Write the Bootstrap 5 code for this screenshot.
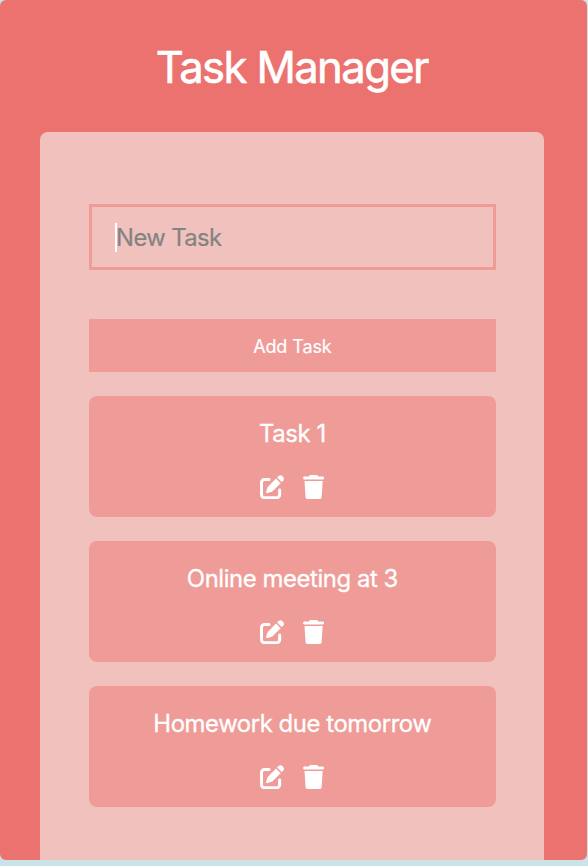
<!DOCTYPE html>
<html lang="en">
<head>
<meta charset="utf-8">
<meta name="viewport" content="width=device-width, initial-scale=1">
<title>Task Manager</title>
<link href="https://cdn.jsdelivr.net/npm/bootstrap@5.3.0/dist/css/bootstrap.min.css" rel="stylesheet">
<style>
body{background:#cbe2e9;font-family:Inter,"Liberation Sans",sans-serif;color:#fff;height:866px}
.app{width:587.4px;height:860px;background:#eb726e;border-radius:6px;padding:41px 43px 0 40.4px}
.app-title{font-size:43.6px;line-height:54px;font-weight:400;letter-spacing:-1.6px;text-indent:-1px;-webkit-text-stroke:.6px #fff;margin-bottom:36.7px}
.panel{background:#f1c1be;border-radius:8px 8px 0 0;padding:72.4px 48.3px 0}
.task-input{height:66px;border:3px solid #ef9b98;padding:1px 24px 0 23.4px;font-size:23.8px;letter-spacing:-.6px;color:#fff}
.task-input input{background:none;border:0;outline:0;padding:1px 0 0;min-width:0;color:#fff;letter-spacing:inherit}
.task-input input::placeholder{color:#838381;opacity:1;-webkit-text-stroke:.2px #838381}
.caret{width:2px;height:29px;background:#fff;margin-right:-1px}
.add-btn{height:53.4px;margin-top:48.6px;padding:2px 0 0;background:#ef9b98;color:#fff;font-size:18px;letter-spacing:-.1px;-webkit-text-stroke:.2px #fff}
.add-btn:hover{background:#ec918e;color:#fff}
.task-item{height:120.8px;margin-top:24.2px;background:#ef9b98;border-radius:8px;padding-top:21.8px}
.task-name{font-size:23.9px;line-height:32px;letter-spacing:-.43px;-webkit-text-stroke:.3px #fff}
.task-tools{margin-top:25px;gap:18.6px}
.task-tools button{background:none;border:0;padding:0;color:#fff}
.task-tools svg{height:24.2px;display:block;fill:currentColor}
</style>
</head>
<body>
<svg class="d-none" aria-hidden="true">
<symbol id="edit" viewBox="0 0 512 512"><path d="M471.6 21.7c-21.9-21.9-57.3-21.9-79.2 0L362.3 51.7l97.9 97.9 30.1-30.1c21.9-21.9 21.9-57.3 0-79.2L471.6 21.7zm-299.2 220c-6.1 6.1-10.8 13.6-13.5 21.9l-29.6 88.8c-2.9 8.6-.6 18.1 5.8 24.6s15.9 8.7 24.6 5.8l88.8-29.6c8.2-2.7 15.7-7.4 21.9-13.5L437.7 172.3 339.7 74.3 172.4 241.7zM96 64C43 64 0 107 0 160V416c0 53 43 96 96 96H352c53 0 96-43 96-96V320c0-17.7-14.3-32-32-32s-32 14.3-32 32v96c0 17.7-14.3 32-32 32H96c-17.7 0-32-14.3-32-32V160c0-17.7 14.3-32 32-32h96c17.7 0 32-14.3 32-32s-14.3-32-32-32H96z"/></symbol>
<symbol id="trash" viewBox="0 0 448 512"><path d="M135.2 17.7L128 32H32C14.3 32 0 46.3 0 64S14.3 96 32 96H416c17.7 0 32-14.3 32-32s-14.3-32-32-32H320l-7.2-14.3C307.4 6.8 296.3 0 284.2 0H163.8c-12.1 0-23.2 6.8-28.6 17.7zM416 128H32L53.2 467c1.6 25.3 22.6 45 47.9 45H346.9c25.3 0 46.3-19.7 47.9-45L416 128z"/></symbol>
</svg>
<main class="app d-flex flex-column overflow-hidden">
<h1 class="app-title text-center mt-0">Task Manager</h1>
<section class="panel flex-grow-1">
<form>
<div class="task-input d-flex align-items-center"><span class="caret flex-shrink-0"></span><input class="flex-grow-1" type="text" placeholder="New Task" aria-label="New Task"></div>
<button type="button" class="btn add-btn w-100 border-0 rounded-0 d-flex align-items-center justify-content-center">Add Task</button>
</form>
<div class="task-item text-center"><div class="task-name">Task 1</div>
<div class="task-tools d-flex justify-content-center"><button aria-label="Edit"><svg width="24.2"><use href="#edit"/></svg></button><button aria-label="Delete"><svg width="21.2"><use href="#trash"/></svg></button></div></div>
<div class="task-item text-center"><div class="task-name">Online meeting at 3</div>
<div class="task-tools d-flex justify-content-center"><button aria-label="Edit"><svg width="24.2"><use href="#edit"/></svg></button><button aria-label="Delete"><svg width="21.2"><use href="#trash"/></svg></button></div></div>
<div class="task-item text-center"><div class="task-name">Homework due tomorrow</div>
<div class="task-tools d-flex justify-content-center"><button aria-label="Edit"><svg width="24.2"><use href="#edit"/></svg></button><button aria-label="Delete"><svg width="21.2"><use href="#trash"/></svg></button></div></div>
</section>
</main>
<script src="https://cdn.jsdelivr.net/npm/bootstrap@5.3.0/dist/js/bootstrap.bundle.min.js"></script>
</body>
</html>
